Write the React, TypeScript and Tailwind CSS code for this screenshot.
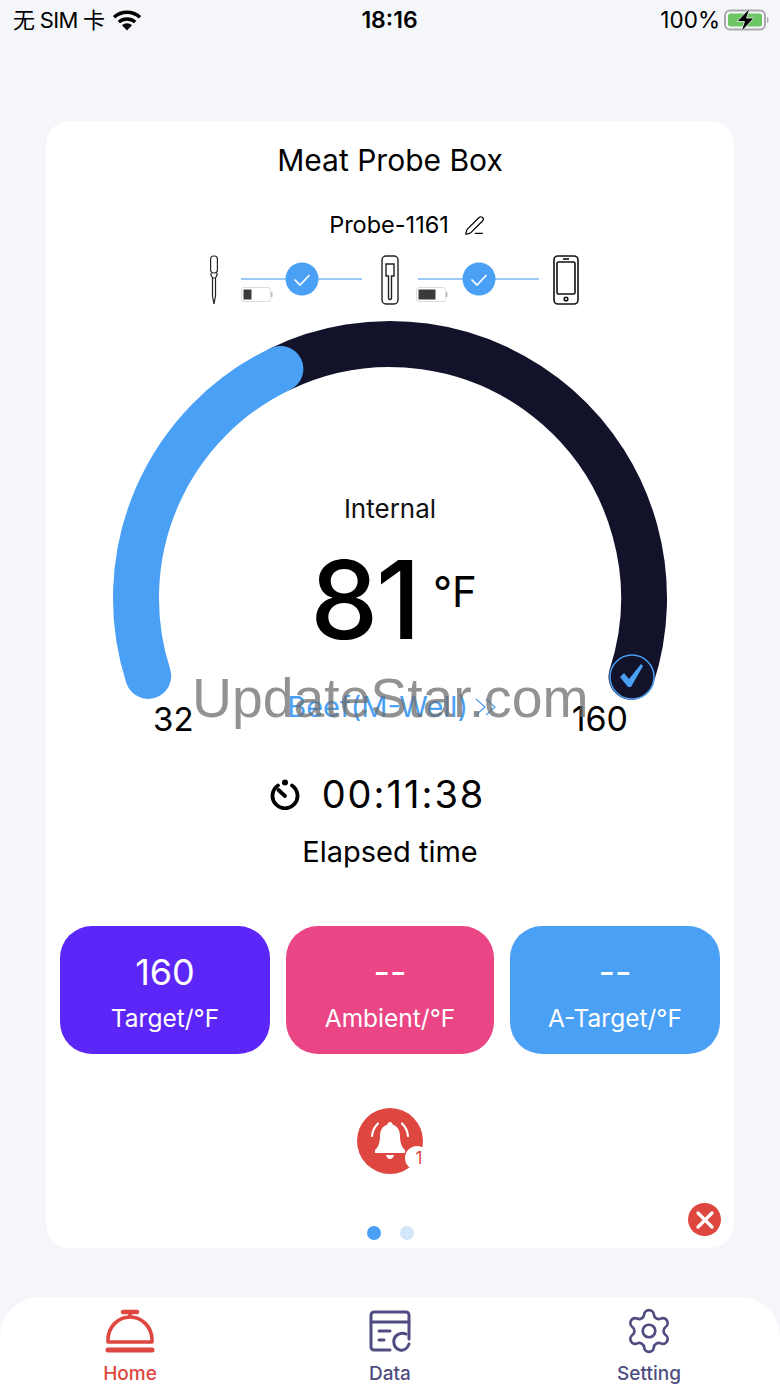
import { PenLine, Settings } from 'lucide-react';

const BLUE = '#4aa0f5';
const RED = '#de4640';
const INDIGO = '#4f4d80';

function WifiIcon() {
  return (
    <svg width="30" height="22" viewBox="0 0 30 22" fill="none" stroke="#000" strokeWidth="3.4">
      <path d="M2 8.2C9.500 1.600 20.500 1.600 28 8.200" />
      <path d="M6.800 13C11.500 9 18.500 9 23.200 13" />
      <path d="M11 17.200C13.300 15.400 16.700 15.400 19 17.200" strokeWidth="3" />
      <path d="M15 21.500l-3-3.200a4.400 4.400 0 0 1 6 0z" fill="#000" stroke="none" />
    </svg>
  );
}

function ChargingBattery() {
  return (
    <svg width="46" height="24" viewBox="0 0 46 24">
      <rect x="1" y="2.500" width="40" height="19" rx="5" fill="none" stroke="#a9a9a9" strokeWidth="2" />
      <rect x="4" y="5.500" width="34" height="13" rx="2.500" fill="#6cc664" />
      <path d="M43 9c2 .5 2 5.500 0 6z" fill="#a9a9a9" />
      <path d="M26 0 13 13.500h7.500L17 24l13-14h-7.500z" fill="#000" stroke="#f5f6fa" strokeWidth="0.800" />
    </svg>
  );
}

function StatusBar() {
  return (
    <div className="flex h-10 items-center justify-between pr-[10px] pl-[13px] text-[22px] text-black">
      <div className="flex w-[196px] items-center gap-[8px]">
        <span className="tracking-[-0.7px]">无 SIM 卡</span>
        <WifiIcon />
      </div>
      <span className="text-[23px] font-semibold">18:16</span>
      <div className="flex w-[200px] items-center justify-end gap-[4px]">
        <span className="text-[22.500px]">100%</span>
        <ChargingBattery />
      </div>
    </div>
  );
}

function ProbeIcon() {
  return (
    <svg width="12" height="50" viewBox="0 0 12 50" fill="none" stroke="#222" strokeWidth="1.2">
      <rect x="2.600" y="1" width="6.800" height="17" rx="3" />
      <path d="M3 18v2l1.500 3h3L9 20v-2" />
      <path d="M4.500 23v18L6 49l1.500-8V23" />
    </svg>
  );
}

function CaseIcon() {
  return (
    <svg width="18" height="50" viewBox="0 0 18 50" fill="none" stroke="#222" strokeWidth="1.4">
      <rect x="1" y="1" width="16" height="48" rx="4" />
      <path d="M5 9h8v12h-2.500v22a1.500 1.500 0 0 1-3 0V21H5z" />
    </svg>
  );
}

function PhoneIcon() {
  return (
    <svg width="26" height="50" viewBox="0 0 26 50" fill="none" stroke="#111" strokeWidth="1.6">
      <rect x="1" y="1" width="24" height="48" rx="4" />
      <rect x="4" y="7" width="18" height="32" rx="1.500" />
      <path d="M10 4h6" />
      <circle cx="13" cy="44" r="1.800" />
    </svg>
  );
}

function LinkIcon({ level, batteryX }: { level: number; batteryX: number }) {
  return (
    <svg className="overflow-visible" width="122" height="50" viewBox="0 0 122 50" fill="none">
      <path d="M0 24h121" stroke="#7db8f4" strokeWidth="1.500" />
      <circle cx="61" cy="24" r="16.500" fill={BLUE} />
      <path d="M53.500 24.500 59 30l9.500-10" stroke="#fff" strokeWidth="1.700" />
      <rect x={batteryX + 0.5} y="32.500" width="29" height="14" rx="2.500" fill="#fff" stroke="#dcdcdc" />
      <rect x={batteryX + 30} y="37" width="1.500" height="5" fill="#bbb" />
      <rect x={batteryX + 2.5} y="34.500" width={level} height="10" fill="#3a3a3a" />
    </svg>
  );
}

function ConnectionRow() {
  return (
    <div className="mt-[12px] flex h-[50px] items-center pl-[162px]">
      <ProbeIcon />
      <div className="ml-[21px]">
        <LinkIcon level={8} batteryX={0} />
      </div>
      <div className="ml-[18px]">
        <CaseIcon />
      </div>
      <div className="ml-[19px]">
        <LinkIcon level={17} batteryX={-2} />
      </div>
      <div className="ml-[13px]">
        <PhoneIcon />
      </div>
    </div>
  );
}

function GaugeArc() {
  return (
    <svg className="absolute inset-0" width="688" height="414" viewBox="46 321 688 414" fill="none">
      <path d="M280.400 368.900A254 254 0 0 1 631.500 676.800" stroke="#12132b" strokeWidth="46" strokeLinecap="round" />
      <path d="M148.200 675.900A254 254 0 0 1 280.400 368.900" stroke={BLUE} strokeWidth="46" strokeLinecap="round" />
      <circle cx="632" cy="677" r="22" fill="#12132b" stroke={BLUE} strokeWidth="1.500" />
      <path d="m620 677 4-4 5 6 12-15 2 2-12 21h-3z" fill={BLUE} />
    </svg>
  );
}

function Gauge() {
  return (
    <div className="relative mt-[16px] h-[414px]">
      <GaugeArc />
      <div className="relative flex flex-col items-center pt-[171px]">
        <div className="text-[26px] leading-[34px] text-[#111]">Internal</div>
        <div className="mt-[19px] flex h-[110px] items-center pl-[7px] text-black">
          <span className="text-[108px] leading-none font-medium tracking-[-2px]">81</span>
          <span className="mb-[16px] ml-[14px] text-[42px] leading-none">°F</span>
        </div>
        <div className="mt-[35px] flex h-[46px] w-full justify-between pr-[106px] pl-[107px]">
          <span className="pt-[6px] text-[33px] leading-[46px] text-black">32</span>
          <span className="ml-[20px] flex h-[34px] items-center gap-[6px] text-[29px] text-[#4aa0f5]">
            Beef(M-Well)
            <svg width="24" height="20" viewBox="0 0 24 20" fill="none" stroke="#4aa0f5" strokeWidth="1.200">
              <path d="M2 2l9 8-9 8M12 2l9 8-9 8" />
            </svg>
          </span>
          <span className="pt-[6px] text-[34px] leading-[46px] text-black">160</span>
        </div>
      </div>
    </div>
  );
}

function StopwatchIcon() {
  return (
    <svg width="32" height="32" viewBox="0 0 32 32" fill="none" stroke="#000" strokeWidth="3.800" strokeLinecap="round">
      <path d="M9 7.500A12.500 12.500 0 1 0 23 7.500" />
      <path d="M9.500 12 16 18" />
      <circle cx="16" cy="4.500" r="3" fill="#000" stroke="none" />
    </svg>
  );
}

function StatCard({ value, label, className }: { value: string; label: string; className: string }) {
  return (
    <div className={`flex h-[128px] flex-col items-center rounded-[32px] pt-[24px] text-white ${className}`}>
      <div className="text-[36px] leading-[44px]">{value}</div>
      <div className="mt-[8px] text-[24.500px] leading-[32px]">{label}</div>
    </div>
  );
}

function BellButton() {
  return (
    <div className="relative mx-auto mt-[54px] size-[66px]">
      <div className="flex size-[66px] items-center justify-center rounded-full bg-[#de4640]">
        <svg width="42" height="42" viewBox="0 0 42 42" fill="#fff">
          <path d="M21 2a2.500 2.500 0 0 1 2.500 2.500C28.500 6 31 10.500 31 16c0 7 2 11.500 5 14v3H6v-3c3-2.500 5-7 5-14 0-5.500 2.500-10 7.500-11.500A2.500 2.500 0 0 1 21 2z" />
          <path d="M17 35h8c-.5 2.500-2.500 4-4 4s-3.500-1.500-4-4z" />
          <path d="M3 16c.5-5 2.500-9 6-12.500M39 16c-.5-5-2.500-9-6-12.500" fill="none" stroke="#fff" strokeWidth="2.200" strokeLinecap="round" />
        </svg>
      </div>
      <span className="absolute top-[38px] left-[48px] flex size-[24px] items-center justify-center rounded-full bg-white pl-[4px] text-[17px] leading-none text-[#de4640]">
        1
      </span>
    </div>
  );
}

function Card() {
  return (
    <section className="relative mx-[46px] mt-[81px] h-[1127px] rounded-[24px] bg-white">
      <h1 className="pt-[21px] text-center text-[30px] leading-[36px] font-normal text-black">Meat Probe Box</h1>
      <div className="mt-[29px] flex h-[36px] items-center justify-center gap-[15px] pl-[34px] text-[23.500px] text-black">
        <span>Probe-1161</span>
        <PenLine size={21} strokeWidth={1.400} />
      </div>
      <ConnectionRow />
      <Gauge />
      <div className="mt-[36px] flex h-[46px] items-center justify-center gap-[21px] pr-[26px] text-black">
        <StopwatchIcon />
        <span className="text-[38px] leading-none tracking-[2px]">00:11:38</span>
      </div>
      <div className="mt-[17px] text-center text-[29px] leading-[36px] text-black">Elapsed time</div>
      <div className="mt-[56px] grid grid-cols-[210px_208px_210px] gap-x-[16px] px-[14px]">
        <StatCard value="160" label="Target/°F" className="bg-[#5d26f8]" />
        <StatCard value="--" label="Ambient/°F" className="bg-[#ea4686]" />
        <StatCard value="--" label="A-Target/°F" className="bg-[#4aa0f5]" />
      </div>
      <BellButton />
      <div className="mt-[52px] flex justify-center gap-[19px]">
        <span className="size-[14px] rounded-full bg-[#4aa0f5]" />
        <span className="size-[14px] rounded-full bg-[#d3e6fa]" />
      </div>
      <button className="absolute top-[1082px] right-[13px] flex size-[33px] items-center justify-center rounded-full bg-[#de4640]">
        <svg width="20" height="20" viewBox="0 0 20 20" stroke="#fff" strokeWidth="3.200" strokeLinecap="round">
          <path d="M3 3l14 14M17 3 3 17" />
        </svg>
      </button>
    </section>
  );
}

function HomeIcon() {
  return (
    <svg width="50" height="44" viewBox="0 0 50 44" fill="none" stroke={RED} strokeWidth="3.600" strokeLinecap="round">
      <path d="M18 3h14" strokeWidth="4.500" />
      <path d="M25 3v4" />
      <path d="M3 33v-2C3 18 13 8 25 8s22 10 22 23v2z" strokeLinejoin="round" />
      <path d="M3 41h44" strokeWidth="5" />
    </svg>
  );
}

function DataIcon() {
  return (
    <svg width="42" height="42" viewBox="0 0 42 42" fill="none" stroke={INDIGO} strokeWidth="3" strokeLinecap="round">
      <path d="M21 40H5a3 3 0 0 1-3-3V5a3 3 0 0 1 3-3h32a3 3 0 0 1 3 3v24" />
      <path d="M2 12h38" />
      <path d="M10 21h11M10 30h5" />
      <path d="M37 24a8 8 0 0 0-7 0 8.500 8.500 0 0 0 1 16c4 1 8-2 9-6" />
    </svg>
  );
}

function TabItem({ label, color, icon, className }: { label: string; color: string; icon: React.ReactNode; className?: string }) {
  return (
    <div className={`flex flex-col items-center ${className ?? ''}`}>
      <div className="flex h-[44px] items-center">{icon}</div>
      <span className="mt-[9px] text-[19px] leading-[24px] font-medium" style={{ color }}>
        {label}
      </span>
    </div>
  );
}

function TabBar() {
  return (
    <nav className="mt-[49px] grid h-[90px] grid-cols-3 rounded-t-[40px] bg-white pt-[12px]">
      <TabItem label="Home" color={RED} icon={<HomeIcon />} />
      <TabItem label="Data" color={INDIGO} icon={<DataIcon />} />
      <TabItem
        label="Setting"
        color={INDIGO}
        className="pr-[2px]"
        icon={<Settings size={50} strokeWidth={1.300} color={INDIGO} />}
      />
    </nav>
  );
}

export default function App() {
  return (
    <div className="relative h-[1387px] w-[780px] overflow-hidden bg-[#f5f6fa] font-['Inter','Noto_Sans_CJK_SC',sans-serif]">
      <StatusBar />
      <Card />
      <TabBar />
      <div className="pointer-events-none absolute top-[662px] left-[192px] font-['Liberation_Sans',sans-serif] text-[55.300px] leading-[72px] text-[#6e6e6e]/75">
        UpdateStar.com
      </div>
    </div>
  );
}
